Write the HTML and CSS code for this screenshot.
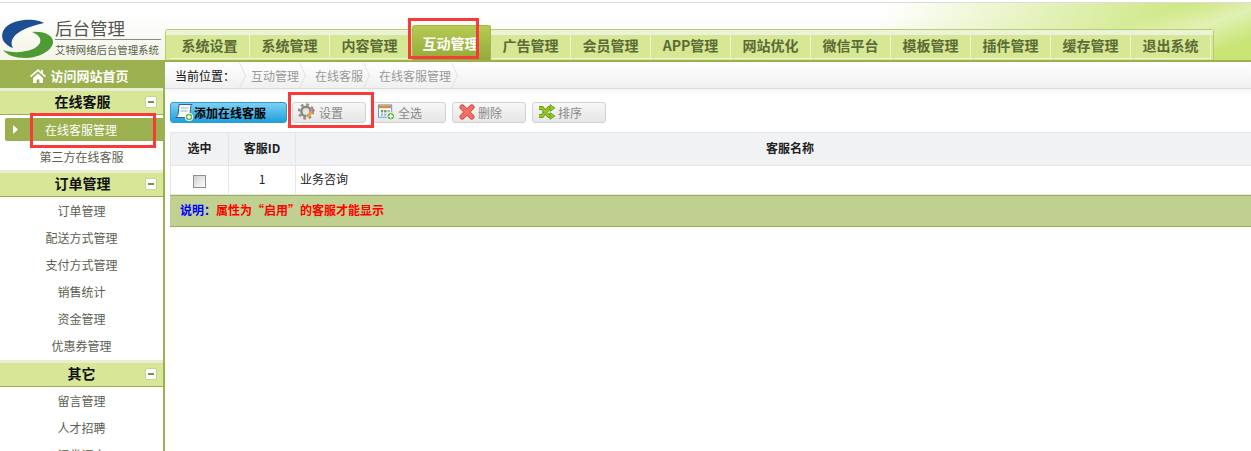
FILE: index.html
```html
<!DOCTYPE html>
<html lang="zh">
<head>
<meta charset="utf-8">
<title>后台管理</title>
<link rel="stylesheet" href="styles.css">
</head>
<body>
<div class="top-rule"></div>
<header class="header">
  <div class="brand">
    <svg class="logo" viewBox="0 0 54 42" width="54" height="42">
      <path fill="#1d4d92" d="M43 4C36-1 14-1 5 8C-1 14-1 24 12 29C8 22 13 16 20 12C27 8 35 6 43 4Z"/>
      <path fill="#4f9a35" d="M31 13C44 12 53 17 52 24C50 33 36 39 24 39C14 39 6 36 2 31C10 34 22 34 32 30C41 26 43 18 31 13Z"/>
    </svg>
    <div class="brand-text">
      <div class="brand-title">后台管理</div>
      <div class="brand-sub">艾特网络后台管理系统</div>
    </div>
  </div>
  <nav class="nav">
    <div class="nav-strip"></div>
    <div class="tabs">
      <a class="tab">系统设置</a><a class="tab">系统管理</a><a class="tab">内容管理</a><a class="tab tab-active">互动管理</a><a class="tab">广告管理</a><a class="tab">会员管理</a><a class="tab">APP管理</a><a class="tab">网站优化</a><a class="tab">微信平台</a><a class="tab">模板管理</a><a class="tab">插件管理</a><a class="tab">缓存管理</a><a class="tab">退出系统</a>
    </div>
  </nav>
</header>
<div class="main">
  <aside class="sidebar">
    <a class="home">
      <svg viewBox="0 0 16 14" width="16" height="14"><path fill="#fff" d="M8 0L0 7l1 1.200L8 2.200l7 6L16 7l-3-2.600V1h-2v1.700zM3 9v5h3.600v-3.400h2.800V14H13V9L8 4.600z"/></svg>
      <span>访问网站首页</span>
    </a>
    <div class="group"><span>在线客服</span><i class="minus"></i></div>
    <a class="item item-active"><svg class="arrow" viewBox="0 0 5 9" width="5" height="9"><path fill="#fff" d="M0 0l5 4.500L0 9z"/></svg>在线客服管理</a>
    <a class="item">第三方在线客服</a>
    <div class="group"><span>订单管理</span><i class="minus"></i></div>
    <a class="item">订单管理</a>
    <a class="item">配送方式管理</a>
    <a class="item">支付方式管理</a>
    <a class="item">销售统计</a>
    <a class="item">资金管理</a>
    <a class="item">优惠券管理</a>
    <div class="group group-gap"><span>其它</span><i class="minus"></i></div>
    <a class="item">留言管理</a>
    <a class="item">人才招聘</a>
    <a class="item">问卷调查</a>
  </aside>
  <main class="content">
    <div class="crumbs">
      <span class="crumb-label">当前位置：</span>
      <span class="crumb">互动管理</span>
      <span class="crumb">在线客服</span>
      <span class="crumb">在线客服管理</span>
    </div>
    <div class="toolbar">
      <a class="btn btn-add">
        <svg viewBox="0 0 20 18" width="20" height="18"><path fill="#f6fafd" stroke="#35618f" d="M5 1.500H18c-1.500 1-1.500 3-1.500 5l-1 8H1.500c2-1 2.500-2.500 2.700-4z"/><path stroke="#9db4cb" d="M7 5h7M6.500 8h7"/><circle cx="15" cy="14" r="3.800" fill="#56ad2c" stroke="#fff"/><path stroke="#fff" stroke-width="1.500" d="M12.800 14h4.400M15 11.800v4.400"/></svg>
        添加在线客服
      </a>
      <a class="btn">
        <svg viewBox="0 0 18 18" width="18" height="18"><circle cx="8" cy="8.500" r="7" fill="none" stroke="#8f8f8a" stroke-width="2.400" stroke-dasharray="2.700 2.800"/><circle cx="8" cy="8.500" r="4.600" fill="none" stroke="#8b8b86" stroke-width="2.600"/><circle cx="8" cy="8.500" r="3" fill="#e6e6e2"/><path stroke="#e5a23f" stroke-width="2.600" d="M9.500 13.500l5.500-6"/><path stroke="#b56bb5" stroke-width="2.600" d="M14.300 8.300l1.800-2"/><path fill="#f3d9a0" d="M7.500 16l1-3.400 2.400 2.200z"/></svg>
        设置
      </a>
      <a class="btn btn-select">
        <svg viewBox="0 0 18 18" width="17" height="18"><rect x=".5" y="1.500" width="14" height="13" fill="#fff" stroke="#5b95cf"/><rect x="1" y="2" width="13" height="3" fill="#e08a3c"/><path fill="#6f9b4c" d="M3 7h2.500v2.500H3zM6.500 7H9v2.500H6.500z"/><path fill="#8fb2d8" d="M10 7h2.500v2.500H10zM3 10.500h2.500V13H3zM6.500 10.500H9V13H6.500z"/><circle cx="13.500" cy="13.500" r="4" fill="#56ad2c" stroke="#fff"/><path stroke="#fff" stroke-width="1.500" d="M11.200 13.500h4.600M13.500 11.200v4.600"/></svg>
        全选
      </a>
      <a class="btn">
        <svg viewBox="0 0 16 16" width="16" height="16"><path stroke="#c84a40" stroke-width="5.400" stroke-linecap="round" d="M3.200 3.200l9.600 9.600M12.800 3.200l-9.600 9.600"/><path stroke="#f07064" stroke-width="3.800" stroke-linecap="round" d="M3.200 3.200l9.600 9.600M12.800 3.200l-9.600 9.600"/></svg>
        删除
      </a>
      <a class="btn">
        <svg viewBox="0 0 16 16" width="16" height="16"><path fill="none" stroke="#5f8f12" stroke-width="3.800" d="M0 4h3l7 8h2M0 12h3l7-8h2"/><path fill="none" stroke="#93c926" stroke-width="2.400" d="M0 4h3l7 8h2M0 12h3l7-8h2"/><path fill="#93c926" stroke="#5f8f12" stroke-width=".7" d="M11 .6L16 4l-5 3.400zM11 8.600l5 3.400-5 3.400z"/></svg>
        排序
      </a>
    </div>
    <table class="grid">
      <thead>
        <tr><th class="col-check">选中</th><th class="col-id">客服ID</th><th>客服名称</th></tr>
      </thead>
      <tbody>
        <tr><td class="center"><span class="check"></span></td><td class="center">1</td><td class="name">业务咨询</td></tr>
      </tbody>
    </table>
    <div class="note"><b class="note-label">说明：</b><b class="note-text">属性为“启用”的客服才能显示</b></div>
  </main>
</div>
<div class="mark mark-tab"></div>
<div class="mark mark-set"></div>
<div class="mark mark-side"></div>
</body>
</html>
```

FILE: styles.css
```css
* { box-sizing: border-box; }
html, body { margin: 0; height: 451px; overflow: hidden; background: #fff; }
body { position: relative; font: 12px "Noto Sans CJK SC", "Liberation Sans", sans-serif; color: #333; }
a { display: block; }

.top-rule { height: 3px; border-bottom: 1px solid #dcdcdc; }

.header {
  display: flex;
  align-items: flex-end;
  height: 59px;
  border-bottom: 2px solid #9bb04f;
  background:
    linear-gradient(160deg, rgba(255,255,255,0) 84%, rgba(255,255,255,.45) 90%, rgba(255,255,255,0) 96%),
    linear-gradient(102deg, rgba(200,228,120,0) 70%, #c9e576 96%),
    linear-gradient(#fff 20%, #f2f5e6);
}
.brand { display: flex; width: 165px; height: 57px; padding: 16px 0 0 1px; }
.logo { flex: none; }
.brand-text { width: 106px; }
.brand-title { height: 22px; margin-top: -1px; border-bottom: 1px solid #888; font-size: 17.500px; line-height: 20px; color: #555; }
.brand-sub { margin-top: 3px; font-size: 10.400px; line-height: 14px; color: #55604a; white-space: nowrap; }

.nav {
  width: 1049px;
  height: 31px;
  border: 1px solid #b7cf68;
  border-bottom: 0;
  border-radius: 3px 3px 0 0;
  background: #d6e795;
}
.nav-strip { height: 5px; background: #ecf2d8; }
.tabs { display: flex; height: 25px; padding-left: 4px; }
.tab {
  flex: none;
  width: 80px;
  height: 24px;
  text-align: center;
  font-size: 14px;
  font-weight: 700;
  line-height: 20px;
  color: #5b6b33;
  background: #d6e795;
  border-right: 1px solid #eef4cf;
  border-bottom: 1px solid #eef4cf;
}
.tab-active {
  position: relative;
  width: 79px;
  height: 35px;
  margin: -10px 0 0 2px;
  padding: 3px 2px 0 0;
  line-height: 28px;
  color: #fff;
  border: 1px solid #a2b84b;
  border-bottom: 0;
  border-radius: 3px 3px 0 0;
  background: linear-gradient(#b6cb52, #93aa3a);
}

.main { display: flex; height: 389px; }

.sidebar {
  flex: none;
  width: 165px;
  height: 420px;
  border-right: 2px solid #9bb04f;
  color: #5b5f50;
}
.home {
  display: flex;
  align-items: center;
  justify-content: center;
  gap: 4px;
  width: 165px;
  height: 26px;
  padding: 1px 6px 0 0;
  background: #9bb04f;
  color: #fff;
  font-size: 13px;
  font-weight: 700;
  white-space: nowrap;
}
.group {
  position: relative;
  height: 27px;
  border-top: 3px solid #e8efd0;
  border-bottom: 1px solid #9bb04f;
  background: #d8e698;
  text-align: center;
  font-size: 14px;
  font-weight: 700;
  line-height: 20px;
  color: #111;
}
.group-gap { margin-top: 1px; }
.group span { position: relative; left: 1px; }
.group-gap span { left: 0; }
.minus {
  position: absolute;
  right: 6px;
  top: 5px;
  width: 12px;
  height: 12px;
  background: #fff;
  border: 1px solid #c8d39c;
  border-radius: 2px;
}
.minus::after {
  content: "";
  position: absolute;
  left: 2px;
  top: 4px;
  width: 6px;
  height: 2px;
  background: #7f9147;
}
.item {
  height: 27px;
  text-align: center;
  line-height: 27px;
  color: #5c6052;
  font-size: 12px;
}
.item-active {
  position: relative;
  height: 23px;
  margin: 3px 0 2px 5px;
  padding-right: 6px;
  line-height: 23px;
  background: #9bb04f;
  border-radius: 2px 0 0 2px;
  color: #fff;
}
.arrow { position: absolute; left: 8px; top: 7px; }

.content { flex: 1; min-width: 0; overflow: hidden; }
.crumbs {
  display: flex;
  align-items: center;
  height: 27px;
  padding-left: 10px;
  overflow: hidden;
  border-bottom: 1px solid #dcdcdc;
  background: linear-gradient(#fff, #f0f0f0);
}
.crumb-label { width: 76px; color: #111; white-space: nowrap; }
.crumb {
  position: relative;
  padding-right: 16px;
  color: #999;
  white-space: nowrap;
}
.crumb::after {
  content: "";
  position: absolute;
  right: 6px;
  top: calc(50% - 9px);
  width: 18px;
  height: 18px;
  border: solid #d8d8d8;
  border-width: 1px 1px 0 0;
  transform: scaleX(.47) rotate(45deg);
}
.crumb-label + .crumb::before {
  content: "";
  position: absolute;
  left: -21px;
  top: calc(50% - 9px);
  width: 18px;
  height: 18px;
  border: solid #d8d8d8;
  border-width: 1px 1px 0 0;
  transform: scaleX(.47) rotate(45deg);
}

.toolbar {
  display: flex;
  gap: 6px;
  height: 43px;
  padding: 13px 0 0 5px;
  background: linear-gradient(#f6f6f6, #fff 6px);
}
.btn {
  display: flex;
  align-items: center;
  gap: 3px;
  width: 74px;
  height: 21px;
  padding: 0 0 1px 5px;
  border: 1px solid #d2d2d2;
  border-radius: 3px;
  background: linear-gradient(#f7f7f7, #e6e6e6);
  color: #888;
  white-space: nowrap;
}
.btn svg { flex: none; }
.btn svg[width="16"] { margin-left: 1px; }
.btn-add {
  width: 117px;
  margin-right: -1px;
  padding-left: 3px;
  gap: 0;
  border: 1px solid #2f9fd0;
  background: linear-gradient(#7fd0f2, #1ea0dc);
  color: #000;
  font-weight: 700;
}

.grid {
  width: 1115px;
  margin-left: 5px;
  border-collapse: collapse;
  table-layout: fixed;
  font-size: 12px;
}
.grid th, .grid td { border: 1px solid #e4e6ea; padding: 0 0 3px; }
.grid th { height: 33px; background: #f1f2f4; color: #222; font-weight: 700; }
.grid td { height: 29px; color: #222; }
.col-check { width: 58px; }
.col-id { width: 67px; }
.center { text-align: center; }
.grid .name { padding-left: 4px; }
.check {
  display: inline-block;
  width: 13px;
  height: 13px;
  margin-top: 3px;
  vertical-align: middle;
  border: 1px solid #8f8f8f;
  background: linear-gradient(135deg, #cfcfcf, #fff);
}
.note {
  width: 1115px;
  height: 32px;
  margin-left: 5px;
  padding-left: 10px;
  border-top: 1px solid #9bb04f;
  border-bottom: 1px solid #9bb04f;
  background: #bfd091;
  line-height: 28px;
}
.note-label { color: #00f; }
.note-text { color: #f00; }

.mark { position: absolute; border: 3px solid #f83a3a; pointer-events: none; }
.mark-tab { left: 408px; top: 18px; width: 71px; height: 41px; }
.mark-set { left: 288px; top: 92px; width: 86px; height: 36px; }
.mark-side { left: 30px; top: 113px; width: 126px; height: 35px; }
```
